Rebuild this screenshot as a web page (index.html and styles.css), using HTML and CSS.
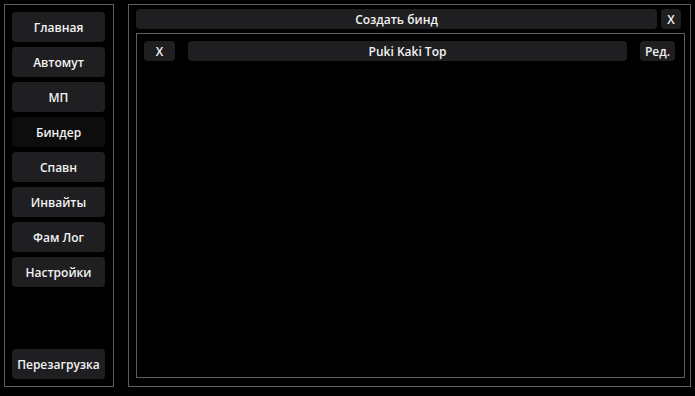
FILE: index.html
```html
<!DOCTYPE html>
<html>
<head>
    <title>Binder</title>
    <link rel="stylesheet" href="styles.css">
</head>
<body>
    <div class="window">
        <div class="sidebar">
            <div class="nav">
                <div class="button">Главная</div>
                <div class="button">Автомут</div>
                <div class="button">МП</div>
                <div class="button active">Биндер</div>
                <div class="button">Спавн</div>
                <div class="button">Инвайты</div>
                <div class="button">Фам Лог</div>
                <div class="button">Настройки</div>
            </div>
            <div class="button">Перезагрузка</div>
        </div>

        <div class="content">
            <div class="toolbar">
                <div class="button wide">Создать бинд</div>
                <div class="button small">X</div>
            </div>
            <div class="binds">
                <div class="bind-row">
                    <div class="button remove">X</div>
                    <div class="button name">Puki Kaki Top</div>
                    <div class="button edit">Ред.</div>
                </div>
            </div>
        </div>
    </div>
</body>
</html>
```

FILE: styles.css
```css
body {
    margin: 0;
    padding: 0;
    background-color: #000000;
    color: #f2f2f2;
    font-family: "Open Sans", "DejaVu Sans", sans-serif;
    font-size: 12px;
    font-weight: 600;
}
.window {
    display: flex;
    gap: 14px;
    padding: 4px;
    height: 383px;
}
.sidebar {
    width: 108px;
    border: 1px solid #5e5e5e;
    padding: 7px 0 7px 7px;
    display: flex;
    flex-direction: column;
    justify-content: space-between;
}
.nav {
    display: flex;
    flex-direction: column;
    gap: 5px;
}
.button {
    background: #1f1f21;
    border-radius: 4px;
    display: flex;
    align-items: center;
    justify-content: center;
    white-space: nowrap;
}
.sidebar .button {
    width: 93px;
    height: 30px;
}
.sidebar .button.active {
    background: #0d0d0d;
}
.content {
    width: 557px;
    border: 1px solid #5e5e5e;
    padding: 4px 5px 8px 7px;
    display: flex;
    flex-direction: column;
    gap: 4px;
}
.toolbar {
    display: flex;
    gap: 4px;
    height: 20px;
}
.wide {
    width: 521px;
}
.small {
    width: 20px;
}
.binds {
    flex: 1;
    width: 540px;
    border: 1px solid #5e5e5e;
    padding: 7px 0 0 7px;
}
.bind-row {
    display: flex;
    gap: 13px;
    height: 20px;
}
.remove {
    width: 31px;
}
.name {
    width: 439px;
}
.edit {
    width: 35px;
}
```
